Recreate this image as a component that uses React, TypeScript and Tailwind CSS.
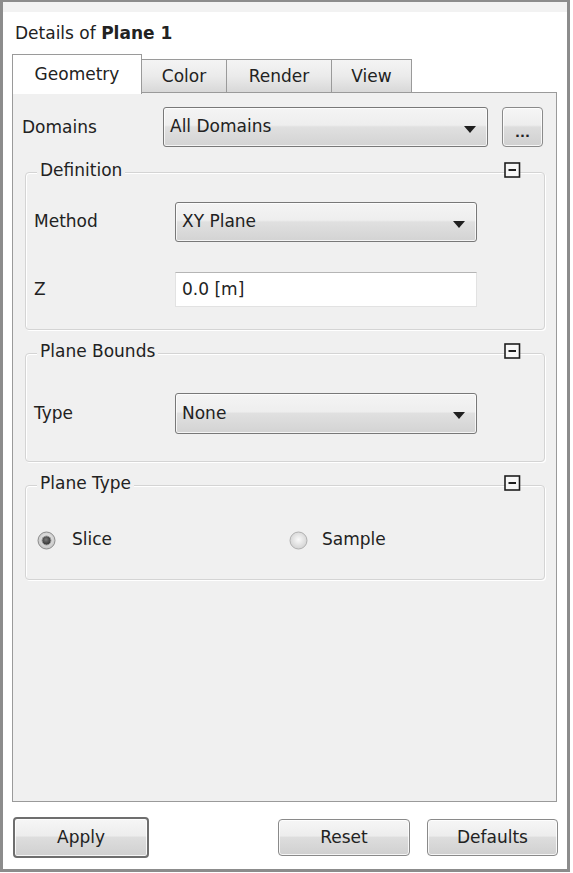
const Arrow = () => (
  <svg width="12" height="7" viewBox="0 0 12 7" className="mt-[4px]">
    <path d="M0 0H12L6 7Z" fill="#1f1f1f" />
  </svg>
);

const MinusBox = () => (
  <svg width="17" height="16" viewBox="0 0 17 16">
    <rect x="1" y="1" width="14.5" height="14" fill="#f7f7f7" stroke="#1e1e1e" strokeWidth="1.6" />
    <path d="M4.5 8H12" stroke="#1e1e1e" strokeWidth="2" />
  </svg>
);

const Radio = ({ checked }: { checked?: boolean }) => (
  <svg width="19" height="19" viewBox="0 0 19 19">
    <defs>
      <radialGradient id={checked ? "rg-on" : "rg-off"} cx="50%" cy="45%" r="60%">
        <stop offset="0%" stopColor="#fafafa" />
        <stop offset="100%" stopColor={checked ? "#bdbdbd" : "#cfcfcf"} />
      </radialGradient>
      <radialGradient id="dot" cx="45%" cy="40%" r="60%">
        <stop offset="0%" stopColor="#7a7a7a" />
        <stop offset="100%" stopColor="#2f2f2f" />
      </radialGradient>
    </defs>
    <circle
      cx="9.5"
      cy="9.5"
      r="8.5"
      fill={`url(#${checked ? "rg-on" : "rg-off"})`}
      stroke={checked ? "#8c8c8c" : "#b0b0b0"}
    />
    {checked && <circle cx="9.5" cy="9.5" r="4.5" fill="url(#dot)" stroke="#9a9a9a" />}
  </svg>
);

function Dropdown({ value, className }: { value: string; className: string }) {
  return (
    <div
      className={`flex items-center justify-between rounded-[3px] border border-[#787878] bg-[linear-gradient(to_bottom,#f4f4f4_0%,#eeeeee_45%,#e0e0e0_50%,#d3d3d3_100%)] pl-[6px] pr-[11px] shadow-[inset_0_0_0_1px_rgba(255,255,255,0.75)] ${className}`}
    >
      <span>{value}</span>
      <Arrow />
    </div>
  );
}

function Group({
  title,
  className,
  children,
}: {
  title: string;
  className: string;
  children: React.ReactNode;
}) {
  return (
    <div className="ml-[12px] w-[520px]">
      <div className="relative z-10 flex h-[20px] items-center justify-between pl-[12px] pr-[24px]">
        <span className="bg-[#f0f0f0] px-[3px] leading-[20px]">{title}</span>
        <MinusBox />
      </div>
      <div
        className={`-mt-[8px] rounded-[4px] border border-[#d4d4d4] shadow-[1px_1px_0_#ffffff,inset_1px_1px_0_#ffffff] ${className}`}
      >
        {children}
      </div>
    </div>
  );
}

const Row = ({ label, children, className }: { label: string; children: React.ReactNode; className?: string }) => (
  <div className={`flex items-center ${className ?? ""}`}>
    <span className="w-[141px]">{label}</span>
    {children}
  </div>
);

const tabs = [
  { name: "Color", w: "w-[85px]" },
  { name: "Render", w: "w-[105px]" },
  { name: "View", w: "w-[80px]" },
];

const btn =
  "flex items-center justify-center rounded-[4px] bg-[linear-gradient(to_bottom,#f6f6f6_0%,#ededed_45%,#dddddd_50%,#d0d0d0_100%)] shadow-[inset_0_0_0_1px_rgba(255,255,255,0.8)]";

export default function App() {
  return (
    <div className="h-[873px] w-[573px] bg-white font-['DejaVu_Sans',sans-serif] text-[17px] text-[#222222]">
      <div className="flex h-[872px] w-[570px] flex-col border-[3px] border-t-2 border-[#8c8c8c] bg-white">
        <div className="h-[10px] bg-[#f2f2f2]" />

        {/* title */}
        <div className="flex h-[42px] items-center pl-[12px] pt-[2px]">
          Details of&nbsp;<b>Plane 1</b>
        </div>

        {/* tabs */}
        <div className="ml-[9px] flex items-end">
          <div className="relative z-10 -mb-[2px] flex h-[40px] w-[130px] items-center justify-center border border-b-0 border-[#9a9a9a] bg-white pt-[1px]">
            Geometry
          </div>
          {tabs.map((t) => (
            <div
              key={t.name}
              className={`flex h-[33px] items-center justify-center border border-b-0 border-l-0 border-[#9a9a9a] bg-[linear-gradient(to_bottom,#f4f4f4_0%,#ebebeb_50%,#d8d8d8_100%)] pt-[2px] ${t.w}`}
            >
              {t.name}
            </div>
          ))}
        </div>

        {/* panel */}
        <div className="ml-[9px] flex h-[710px] w-[545px] flex-col border border-[#9a9a9a] bg-[#f0f0f0]">
          <div className="mt-[14px] flex items-center pl-[9px]">
            <span className="w-[141px] pt-[2px]">Domains</span>
            <Dropdown value="All Domains" className="h-[40px] w-[325px]" />
            <div className={`${btn} ml-[14px] h-[40px] w-[41px] border border-[#8a8a8a] pt-[10px] text-[13px] font-bold leading-none`}>
              ...
            </div>
          </div>

          <div className="mt-[13px]">
            <Group title="Definition" className="px-[8px] pb-[22px] pt-[29px]">
              <Row label="Method">
                <Dropdown value="XY Plane" className="h-[40px] w-[302px]" />
              </Row>
              <Row label="Z" className="mt-[30px]">
                <div className="flex h-[35px] w-[302px] items-center border border-[#e2e2e2] border-t-[#b5b5b5] bg-white pl-[6px]">
                  0.0 [m]
                </div>
              </Row>
            </Group>
          </div>

          <div className="mt-[11px]">
            <Group title="Plane Bounds" className="px-[8px] pb-[27px] pt-[39px]">
              <Row label="Type">
                <Dropdown value="None" className="h-[41px] w-[302px]" />
              </Row>
            </Group>
          </div>

          <div className="mt-[11px]">
            <Group title="Plane Type" className="pb-[27px] pl-[11px] pt-[42px]">
              <div className="flex h-[24px] items-center">
                <label className="flex w-[252px] items-center gap-[16px]">
                  <Radio checked />
                  Slice
                </label>
                <label className="flex items-center gap-[14px]">
                  <Radio />
                  Sample
                </label>
              </div>
            </Group>
          </div>
        </div>

        {/* buttons */}
        <div className="mt-[15px] flex h-[41px] items-center justify-between pl-[10px] pr-[9px]">
          <div className={`${btn} h-[41px] w-[136px] border-2 border-[#6e6e6e]`}>Apply</div>
          <div className="flex gap-[17px]">
            <div className={`${btn} h-[37px] w-[132px] border border-[#8a8a8a]`}>Reset</div>
            <div className={`${btn} h-[37px] w-[131px] border border-[#8a8a8a]`}>Defaults</div>
          </div>
        </div>
      </div>
    </div>
  );
}
